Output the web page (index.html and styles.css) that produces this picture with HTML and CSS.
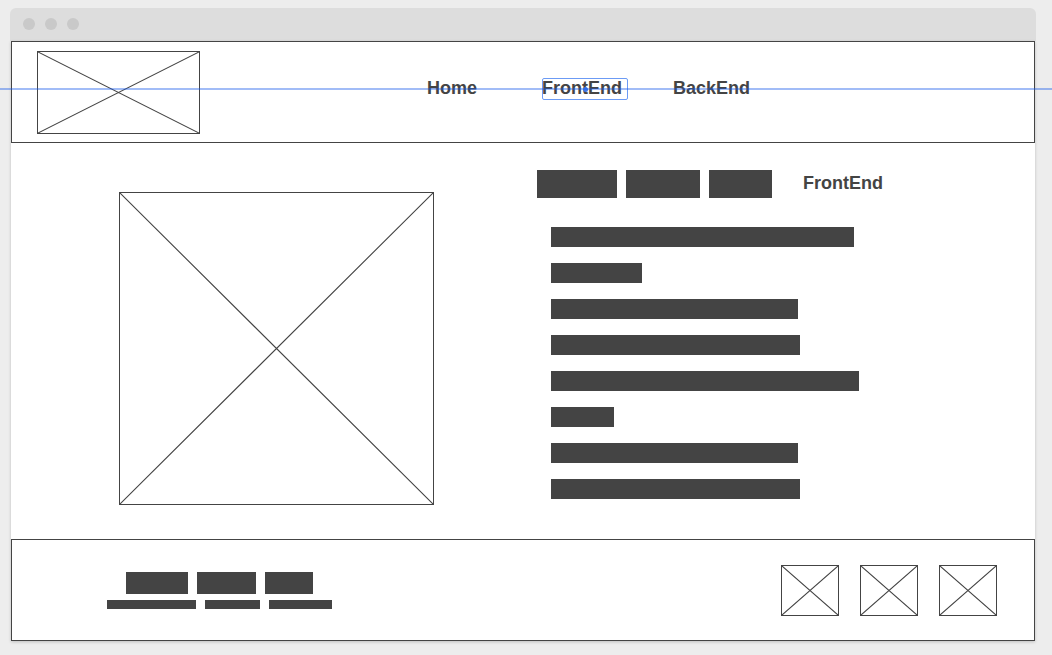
FILE: index.html
```html
<!DOCTYPE html>
<html lang="en">
<head>
<meta charset="utf-8">
<title>FrontEnd</title>
<link rel="stylesheet" href="styles.css">
</head>
<body>
<div class="window">
  <div class="titlebar"><span class="dot"></span><span class="dot"></span><span class="dot"></span></div>
  <div class="page">
    <header class="header">
      <svg class="placeholder logo" viewBox="0 0 100 100" preserveAspectRatio="none" role="img" aria-label="Logo"><path d="M0 0L100 100M100 0L0 100"/></svg>
      <nav class="nav">
        <a class="nav-link" href="#home">Home</a>
        <a class="nav-link selected" href="#frontend">FrontEnd</a>
        <a class="nav-link" href="#backend">BackEnd</a>
      </nav>
    </header>
    <main class="main">
      <svg class="placeholder picture" viewBox="0 0 100 100" preserveAspectRatio="none" role="img" aria-label="Picture"><path d="M0 0L100 100M100 0L0 100"/></svg>
      <section class="article">
        <div class="heading">
          <div class="words title-words"><span class="w80"></span><span class="w74"></span><span class="w63"></span></div>
          <h1 class="title">FrontEnd</h1>
        </div>
        <div class="lines">
          <span class="w303"></span>
          <span class="w91"></span>
          <span class="w247"></span>
          <span class="w249"></span>
          <span class="w308"></span>
          <span class="w63"></span>
          <span class="w247"></span>
          <span class="w249"></span>
        </div>
      </section>
    </main>
    <footer class="footer">
      <div class="credits">
        <div class="words large-words"><span class="w62"></span><span class="w59"></span><span class="w48"></span></div>
        <div class="words small-words"><span class="w89"></span><span class="w55"></span><span class="w63"></span></div>
      </div>
      <div class="icons">
        <svg class="placeholder icon" viewBox="0 0 100 100" preserveAspectRatio="none" role="img" aria-label="Icon"><path d="M0 0L100 100M100 0L0 100"/></svg>
        <svg class="placeholder icon" viewBox="0 0 100 100" preserveAspectRatio="none" role="img" aria-label="Icon"><path d="M0 0L100 100M100 0L0 100"/></svg>
        <svg class="placeholder icon" viewBox="0 0 100 100" preserveAspectRatio="none" role="img" aria-label="Icon"><path d="M0 0L100 100M100 0L0 100"/></svg>
      </div>
    </footer>
  </div>
</div>
<div class="guide"></div>
</body>
</html>
```

FILE: styles.css
```css
* { box-sizing: border-box; }

body {
  position: relative;
  margin: 0;
  padding: 8px 16px 14px 10px;
  background: #ededed;
  color: #444;
  font: bold 18px/20px "Liberation Sans", Arial, sans-serif;
}

.titlebar {
  display: flex;
  gap: 10px;
  height: 33px;
  padding: 10px 13px;
  border-radius: 6px 6px 0 0;
  background: #ddd;
}

.dot {
  width: 12px;
  height: 12px;
  border-radius: 50%;
  background: #c9c9c9;
}

.page {
  margin: 0 1px;
  background: #fff;
  box-shadow: 0 1px 3px rgba(0, 0, 0, 0.2);
}

/* Crossed boxes standing in for images */
.placeholder {
  display: block;
  flex: none;
  border: 1px solid #444;
  fill: none;
  stroke: #444;
  stroke-width: 1.1;
}

.placeholder path { vector-effect: non-scaling-stroke; }

.logo { width: 163px; height: 83px; }
.picture { width: 315px; height: 313px; margin: 22px 0 0 108px; }
.icon { width: 58px; height: 51px; }

.header {
  display: flex;
  align-items: flex-start;
  gap: 227px;
  padding: 9px 25px 8px;
  border: 1px solid #444;
}

.nav {
  display: flex;
  gap: 45px;
  padding-top: 27px;
}

.nav-link {
  min-width: 70px;
  color: inherit;
  text-decoration: none;
}

.selected {
  position: relative;
  min-width: 86px;
}

/* Selection frame and its centre handle */
.selected::before {
  content: "";
  position: absolute;
  inset: 0 0 -2px;
  border: 1px solid #6c9bf5;
  border-radius: 2px;
}

.selected::after {
  content: "";
  position: absolute;
  top: 9px;
  left: 41px;
  width: 5px;
  height: 5px;
  border-radius: 50%;
  background: #3f78e8;
}

.main {
  display: grid;
  grid-template-columns: 1fr 1fr;
  align-items: start;
  padding: 27px 0 34px;
}

.article { padding-left: 14px; }

.heading {
  display: flex;
  gap: 31px;
}

.title {
  margin: 0;
  padding-top: 3px;
  font: inherit;
}

.words {
  display: flex;
  justify-content: center;
  gap: 9px;
}

.words span, .lines span { background: #444; }

.title-words { height: 28px; }
.large-words { height: 22px; }
.small-words { height: 9px; }

.lines {
  display: grid;
  justify-items: start;
  grid-auto-rows: 20px;
  gap: 16px;
  padding: 29px 0 0 14px;
}

.lines span { height: 20px; }

.footer {
  display: flex;
  align-items: center;
  justify-content: space-between;
  padding: 25px 37px 24px 95px;
  border: 1px solid #444;
}

.credits {
  display: grid;
  gap: 6px;
}

.icons {
  display: flex;
  gap: 21px;
}

/* Horizontal alignment guide */
.guide {
  position: absolute;
  top: 88px;
  left: 0;
  right: 0;
  height: 2px;
  background: rgba(20, 88, 235, 0.4);
  pointer-events: none;
}

.w48 { width: 48px; }
.w55 { width: 55px; }
.w59 { width: 59px; }
.w62 { width: 62px; }
.w63 { width: 63px; }
.w74 { width: 74px; }
.w80 { width: 80px; }
.w89 { width: 89px; }
.w91 { width: 91px; }
.w247 { width: 247px; }
.w249 { width: 249px; }
.w303 { width: 303px; }
.w308 { width: 308px; }
```
